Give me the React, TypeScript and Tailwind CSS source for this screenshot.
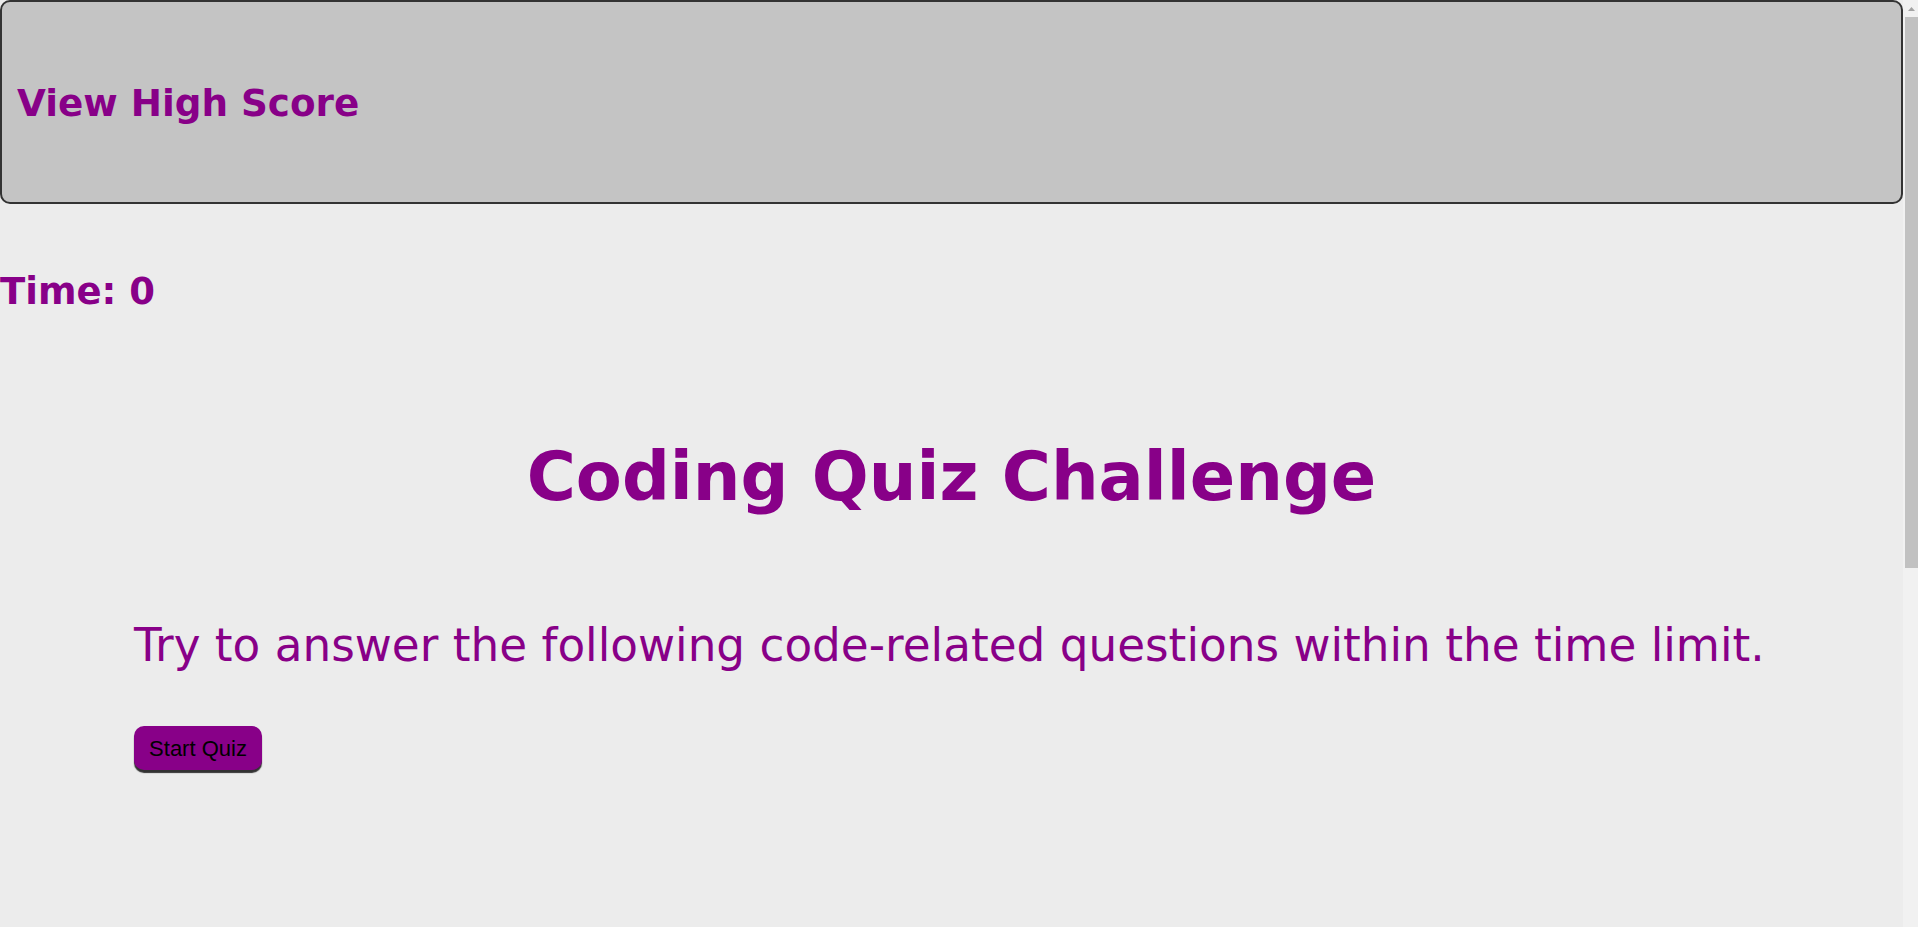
export default function App() {
  return (
    <div className="flex h-screen overflow-hidden bg-[#ececec]">
      <div className="min-w-0 flex-1 font-['DejaVu_Sans',Verdana,sans-serif] text-[#880088]">
        <header className="flex h-[204px] items-center rounded-[10px] border-2 border-[#333] bg-[#c4c4c4] pl-[15px] pt-[4px]">
          <h2 className="text-[37.3px] font-bold leading-none">View High Score</h2>
        </header>

        <div className="mt-[69px] text-[37px] font-bold leading-none">Time: 0</div>

        <main className="mt-[134px]">
          <h1 className="text-center text-[67px] font-bold leading-none">Coding Quiz Challenge</h1>
          <div className="pl-[134px]">
            <p className="mt-[112px] whitespace-nowrap text-[45.3px] leading-none">
              Try to answer the following code-related questions within the time limit.
            </p>
            <button className="mt-[58px] flex h-[44px] w-[128px] items-center justify-center rounded-[10px] bg-[#880088] font-['Liberation_Sans',Arial,sans-serif] text-[22px] text-black shadow-[0_3px_1px_#333]">
              Start Quiz
            </button>
          </div>
        </main>
      </div>

      {/* page scrollbar */}
      <div className="flex w-[15px] shrink-0 flex-col bg-[#f1f1f1]">
        <div className="flex h-[17px] items-center justify-center pl-[2px]">
          <svg width="7" height="4" viewBox="0 0 7 4">
            <path d="M3.5 0L7 4H0z" fill="#a3a3a3" />
          </svg>
        </div>
        <div className="ml-[2px] h-[551px] bg-[#c1c1c1]" />
      </div>
    </div>
  );
}
